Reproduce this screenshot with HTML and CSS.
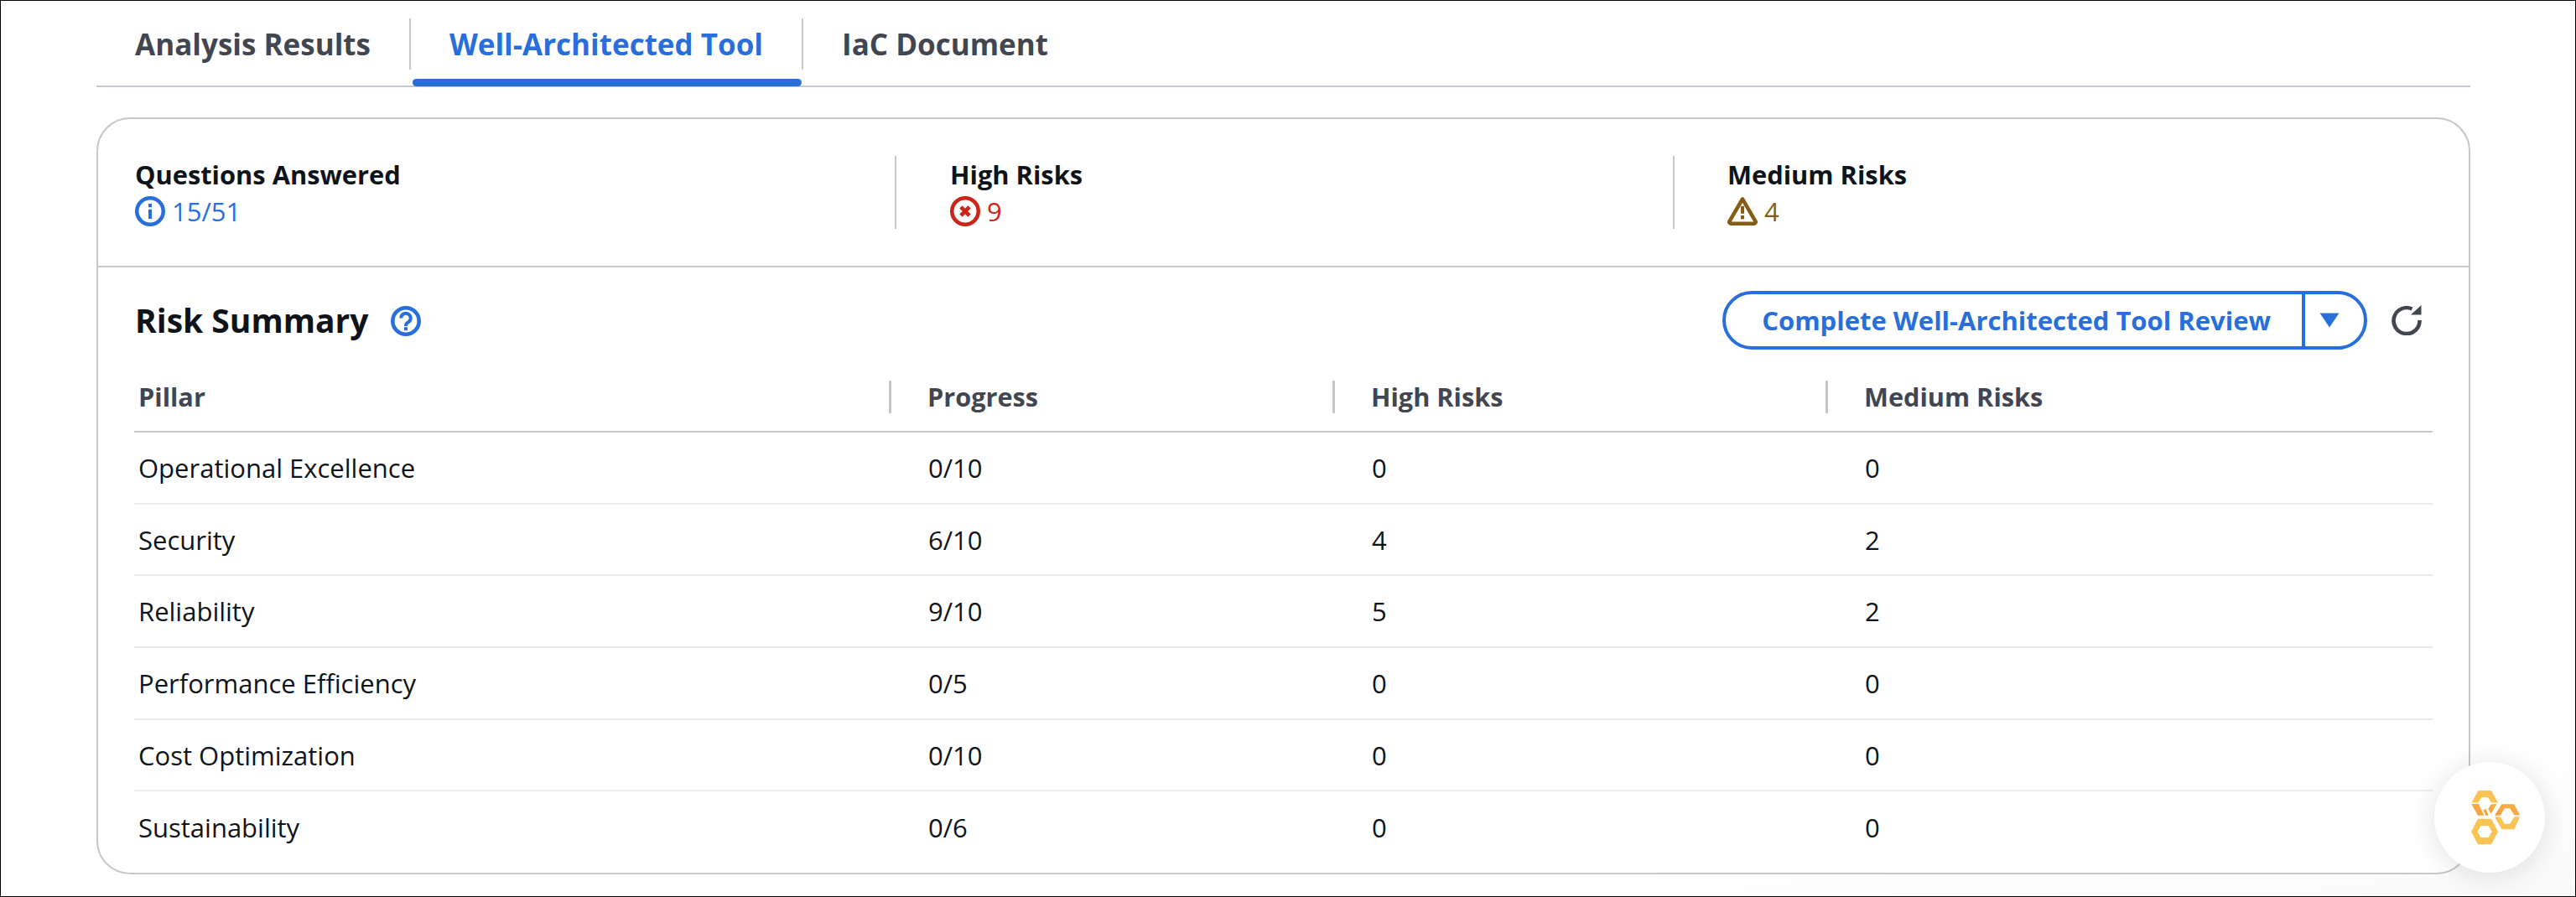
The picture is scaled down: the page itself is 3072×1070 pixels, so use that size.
FILE: index.html
```html
<!DOCTYPE html>
<html lang="en">
<head>
<meta charset="utf-8">
<title>Well-Architected Tool</title>
<link rel="stylesheet" href="styles.css">
</head>
<body>
<div class="page">
  <nav class="tabs">
    <div class="tab">Analysis Results</div>
    <div class="tab tab-active">Well-Architected Tool</div>
    <div class="tab tab-last">IaC Document</div>
  </nav>
  <section class="card">
    <div class="stats">
      <div class="stat stat-first">
        <div class="stat-label">Questions Answered</div>
        <div class="stat-value blue">
          <svg class="status-icon" viewBox="0 0 32 32"><circle cx="16" cy="16" r="14" fill="none" stroke="currentColor" stroke-width="4"/><rect x="14.200" y="14" width="3.600" height="10" fill="currentColor"/><rect x="14.200" y="8" width="3.600" height="3.800" fill="currentColor"/></svg>
          <span>15/51</span>
        </div>
      </div>
      <div class="stat stat-second">
        <div class="stat-label">High Risks</div>
        <div class="stat-value red">
          <svg class="status-icon" viewBox="0 0 32 32"><circle cx="16" cy="16" r="14" fill="none" stroke="currentColor" stroke-width="4"/><path d="M11.500 11.500l9 9M20.500 11.500l-9 9" stroke="currentColor" stroke-width="4.200" fill="none"/></svg>
          <span>9</span>
        </div>
      </div>
      <div class="stat stat-third">
        <div class="stat-label">Medium Risks</div>
        <div class="stat-value brown">
          <svg class="status-icon" viewBox="0 0 32 32"><path d="M16 3L2.300 26.500a1.600 1.600 0 0 0 1.400 2.500h24.600a1.600 1.600 0 0 0 1.400-2.500z" fill="none" stroke="currentColor" stroke-width="4" stroke-linejoin="round"/><rect x="14.200" y="10.500" width="3.600" height="8" fill="currentColor"/><rect x="14.200" y="20.500" width="3.600" height="3.800" fill="currentColor"/></svg>
          <span>4</span>
        </div>
      </div>
    </div>
    <div class="summary">
      <div class="summary-head">
        <div class="summary-title">
          <h2>Risk Summary</h2>
          <svg class="help-icon" viewBox="0 0 36 36"><circle cx="18" cy="18" r="15.700" fill="none" stroke="currentColor" stroke-width="4.600"/><path d="M12.300 14.500a5.700 5.700 0 1 1 8.700 4.800c-1.900 1.100-3 1.900-3 3.900v.8" fill="none" stroke="currentColor" stroke-width="4"/><rect x="16" y="25.200" width="4" height="4" fill="currentColor"/></svg>
        </div>
        <div class="actions">
          <div class="split-button">
            <span class="split-main">Complete Well-Architected Tool Review</span>
            <span class="split-caret"><svg viewBox="0 0 24 18"><path d="M0.500 0.500h23L12 17.500z" fill="currentColor"/></svg></span>
          </div>
          <svg class="refresh" viewBox="0 0 36 36"><path d="M24.500 4.500A15.500 15.500 0 1 0 33.500 18" fill="none" stroke="currentColor" stroke-width="4.600"/><path d="M35.500 0v11.500H23z" fill="currentColor"/></svg>
        </div>
      </div>
      <div class="table">
        <div class="row row-head">
          <div class="cell">Pillar</div>
          <div class="cell cell-sep">Progress</div>
          <div class="cell cell-sep">High Risks</div>
          <div class="cell cell-sep">Medium Risks</div>
        </div>
        <div class="row"><div class="cell">Operational Excellence</div><div class="cell cell-val">0/10</div><div class="cell cell-val">0</div><div class="cell cell-val">0</div></div>
        <div class="row"><div class="cell">Security</div><div class="cell cell-val">6/10</div><div class="cell cell-val">4</div><div class="cell cell-val">2</div></div>
        <div class="row"><div class="cell">Reliability</div><div class="cell cell-val">9/10</div><div class="cell cell-val">5</div><div class="cell cell-val">2</div></div>
        <div class="row"><div class="cell">Performance Efficiency</div><div class="cell cell-val">0/5</div><div class="cell cell-val">0</div><div class="cell cell-val">0</div></div>
        <div class="row"><div class="cell">Cost Optimization</div><div class="cell cell-val">0/10</div><div class="cell cell-val">0</div><div class="cell cell-val">0</div></div>
        <div class="row row-last"><div class="cell">Sustainability</div><div class="cell cell-val">0/6</div><div class="cell cell-val">0</div><div class="cell cell-val">0</div></div>
      </div>
    </div>
  </section>
  <div class="fab">
    <svg viewBox="0 -1 58 66" class="fab-logo">
      <defs>
        <linearGradient id="amber" x1="0" y1="1" x2="1" y2="0">
          <stop offset="0" stop-color="#f59a35"/>
          <stop offset="1" stop-color="#f9b44a"/>
        </linearGradient>
      </defs>
      <path d="M0.500 14.500L8.500 0H24l8 14.500h-8L20 8h-7.500L8.500 14.500z" fill="#fbc354"/>
      <path d="M0.300 16H9l6.300 13.700H8z" fill="url(#amber)"/>
      <path d="M14.300 23l3.400-1 3 7.700h-3.400z" fill="url(#amber)"/>
      <path d="M20.300 22l3.400-5.500 6.600-.5-6.600 11.700z" fill="url(#amber)"/>
      <path d="M28 29.700L36.300 16.300h15L58 29.300h-6.700L46.300 21.300h-6.600L34.700 29.700z" fill="url(#amber)"/>
      <path d="M28 31.300h6.700l5 8.400h6.600l5-8.400H58l-6.700 15h-15z" fill="#fbc354"/>
      <path d="M8 33.700h16L32 49l-8 15.300H8L0 49zM11.500 42L7.300 49l4.200 7h9l4.200-7-4.200-7z" fill="#fbc354" fill-rule="evenodd"/>
    </svg>
  </div>
</div>
</body>
</html>
```

FILE: styles.css
```css
* { box-sizing: border-box; }
html, body { margin: 0; padding: 0; }
body { background: #fff; font-family: "Open Sans", "Noto Sans", sans-serif; color: #0f141a; }
.page { position: relative; width: 3072px; height: 1070px; border: 1px solid #000; padding: 0 125px 0 114px; overflow: hidden; background: linear-gradient(172deg, #fff 88%, #f9f9fa 100%); }
.tabs { display: flex; height: 103px; padding-top: 21px; border-bottom: 2px solid #c6c6cd; }
.tab { position: relative; height: 61px; padding: 0 46px; font-size: 35px; font-weight: 700; color: #424650; line-height: 61px; white-space: nowrap; }
.tab-active { color: #296fdb; border-left: 2px solid #c6c6cd; border-right: 2px solid #c6c6cd; }
.tab-active::after { content: ""; position: absolute; left: 2px; right: 0; top: 72px; height: 9px; border-radius: 5px; background: #296fdb; }
.card { margin-top: 36px; height: 903px; border: 2px solid #c6c6cd; border-radius: 40px; background: #fff; }
.stats { display: flex; height: 177px; border-bottom: 2px solid #c6c6cd; padding-top: 44px; }
.stat { height: 87px; padding-top: 3px; }
.stat-first { width: 950px; padding-left: 44px; }
.stat-second { width: 928px; padding-left: 64px; border-left: 2px solid #c6c6cd; }
.stat-third { padding-left: 63px; border-left: 2px solid #c6c6cd; }
.stat-label { font-size: 30.800px; font-weight: 700; line-height: 38px; color: #0f141a; }
.stat-value { display: flex; align-items: center; gap: 8px; font-size: 31px; line-height: 40px; margin-top: 5px; }
.status-icon { width: 36px; height: 36px; flex: none; }
.blue { color: #296fdb; }
.red { color: #cc2418; }
.brown { color: #855c14; }
.summary { padding: 0 43px; }
.summary-head { display: flex; align-items: center; justify-content: space-between; height: 126px; padding-left: 1px; }
.summary-title { display: flex; align-items: center; gap: 26px; }
.summary-title h2 { margin: 0; font-size: 39px; font-weight: 700; line-height: 50px; color: #0f141a; }
.help-icon { width: 36px; height: 36px; color: #296fdb; margin-top: 2px; }
.actions { display: flex; align-items: center; gap: 29px; margin-right: 13px; }
.split-button { display: flex; align-items: center; height: 70px; border: 4px solid #296fdb; border-radius: 35px; color: #296fdb; font-size: 31px; font-weight: 700; }
.split-main { padding: 0 37px 0 43px; white-space: nowrap; line-height: 62px; }
.split-caret { display: flex; align-items: center; justify-content: center; width: 74px; height: 62px; padding-right: 12px; border-left: 4px solid #296fdb; }
.split-caret svg { width: 24px; height: 18px; }
.refresh { width: 36px; height: 36px; color: #424650; }
.table { display: flex; flex-direction: column; }
.row { display: grid; grid-template-columns: 900px 529px 588px 724px; align-items: center; height: 85.700px; border-bottom: 2px solid #ebebf0; font-size: 31px; color: #0f141a; }
.row-head { height: 71px; padding-top: 9px; border-bottom: 2px solid #c6c6cd; color: #424650; font-weight: 700; font-size: 30.700px; align-items: start; }
.row-last { border-bottom: 0; }
.cell { padding-left: 5px; white-space: nowrap; }
.cell-val { padding-left: 47px; }
.cell-sep { padding-left: 43px; border-left: 3px solid #c6c6cd; height: 39px; }
.row-head .cell { line-height: 39px; }
.fab { position: absolute; left: 2902px; top: 908px; width: 132px; height: 132px; padding-left: 14px; border-radius: 50%; background: #fff; box-shadow: 0 4px 32px rgba(0,0,0,.12); display: flex; align-items: center; justify-content: center; }
.fab-logo { width: 58px; height: 66px; }
```
